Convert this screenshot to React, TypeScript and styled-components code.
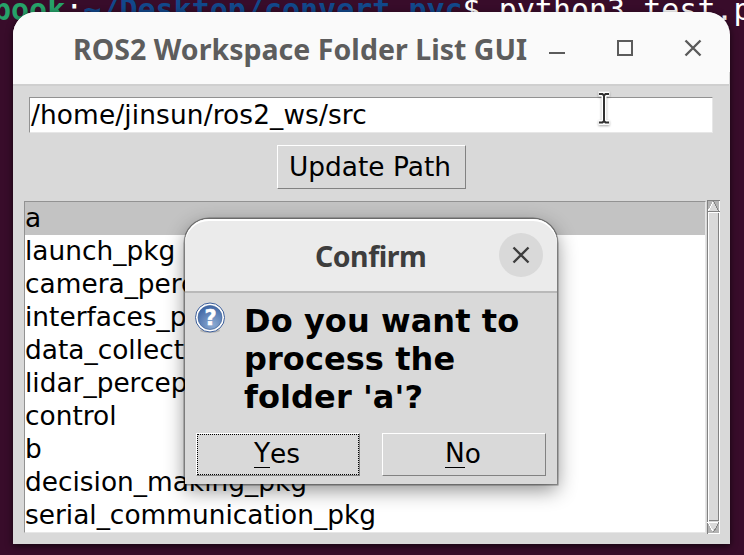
import React from 'react';
import styled, { createGlobalStyle } from 'styled-components';

const GlobalStyle = createGlobalStyle`
  * { box-sizing: border-box; }
  body { margin: 0; overflow: hidden; }
`;

const uiFont = '"DejaVu Sans", sans-serif';
const titleFont = '"Noto Sans", "Open Sans", sans-serif';

const Desktop = styled.div`
  position: relative;
  width: 744px;
  height: 555px;
  padding: 12px 14px 11px 13px;
  overflow: hidden;
  background: #380c2a;
  font-family: ${uiFont};
  color: #000;
`;

const TerminalLine = styled.div`
  position: absolute;
  left: -7px;
  top: -8px;
  font: 30px/36px "DejaVu Sans Mono", monospace;
  white-space: pre;
`;

const Prompt = styled.span<{ $color: string; $bold?: boolean }>`
  color: ${p => p.$color};
  font-weight: ${p => (p.$bold ? 700 : 400)};
`;

const Window = styled.main`
  position: relative;
  display: flex;
  flex-direction: column;
  width: 717px;
  height: 532px;
  border-radius: 23px 23px 0 0;
  background: linear-gradient(#fafafa 60px, #d9d9d9 60px);
  box-shadow: 0 2px 7px rgba(0, 0, 0, 0.65);
`;

const TitleBar = styled.header`
  display: flex;
  align-items: center;
  flex: none;
  width: 716px;
  height: 74px;
  padding-left: 60px;
  border-radius: 23px 23px 0 0;
  border-bottom: 2px solid #cfcfcf;
  background: #fafafa;
`;

const Title = styled.h1<{ $spacing: number; $color: string }>`
  margin: 2px 0 0;
  font: 700 28.5px/40px ${titleFont};
  letter-spacing: ${p => p.$spacing}px;
  color: ${p => p.$color};
  white-space: nowrap;
`;

const WindowControls = styled.div`
  display: flex;
  gap: 44px;
  margin-left: auto;
  margin-right: 24px;
`;

const Glyph = styled.svg`
  display: block;
  width: 24px;
  height: 24px;
  fill: none;
  stroke: #5b5b5b;
  stroke-width: 2;
`;

const Body = styled.section`
  display: flex;
  flex-direction: column;
  align-items: center;
  padding: 11px 1px 0 0;
`;

const Entry = styled.div`
  width: 684px;
  height: 36px;
  padding-left: 1px;
  border: 1px solid;
  border-color: #929292 #e7e7e7 #e7e7e7 #929292;
  background: #fff;
  font-size: 26.4px;
  line-height: 34px;
  letter-spacing: 0.12px;
  white-space: nowrap;
`;

const Button = styled.div<{ $width: number; $height: number; $focused?: boolean }>`
  display: flex;
  align-items: center;
  justify-content: center;
  width: ${p => p.$width}px;
  height: ${p => p.$height}px;
  padding: 0 2px 2px 0;
  border: 1px solid;
  border-color: #fff #828282 #828282 #fff;
  font-size: 26.4px;
  line-height: 31px;
  outline: ${p => (p.$focused ? '1px dotted #000' : 'none')};
  outline-offset: -2px;
`;

const UpdateButton = styled(Button)`
  margin: 12px 0;
`;

const ListArea = styled.div`
  display: flex;
  align-items: center;
  align-self: flex-start;
  gap: 1px;
  margin-top: -1px;
  margin-left: 11px;
`;

const ListBox = styled.div`
  width: 682px;
  height: 332px;
  border: 1px solid;
  border-color: #929292 #e7e7e7 #e7e7e7 #929292;
  background: #fff;
`;

const ListRow = styled.div<{ $selected?: boolean }>`
  height: 33px;
  background: ${p => (p.$selected ? '#c3c3c3' : 'transparent')};
  font-size: 26.4px;
  line-height: 31px;
  white-space: nowrap;
`;

const ScrollBar = styled.svg`
  display: block;
  width: 13px;
  height: 334px;
`;

const Dialog = styled.div`
  position: absolute;
  left: 185px;
  top: 219px;
  width: 372px;
  height: 265px;
  border-radius: 24px 24px 0 0;
  background: #d9d9d9;
  box-shadow: 0 0 0 1.5px rgba(0, 0, 0, 0.38), 0 6px 20px rgba(0, 0, 0, 0.45);
`;

const DialogTitleBar = styled.header`
  display: flex;
  align-items: center;
  justify-content: space-between;
  height: 74px;
  padding: 0 14px 0 130px;
  border-radius: 24px 24px 0 0;
  border-bottom: 2px solid #b9b9b9;
  box-shadow: inset 0 2px 0 #fff;
  background: #ebebeb;
`;

const CloseButton = styled.div`
  display: grid;
  place-items: center;
  width: 44px;
  height: 44px;
  border-radius: 50%;
  background: #d9d9d9;
`;

const DialogMessage = styled.div`
  display: flex;
  gap: 18px;
  padding: 9px 0 0 9px;
`;

const Question = styled.p`
  width: 300px;
  margin: 0;
  font-size: 32px;
  font-weight: 700;
  line-height: 38px;
  letter-spacing: 0.08px;
  white-space: pre;
`;

const QuestionIcon = styled.svg`
  width: 32px;
  height: 32px;
  flex: none;
`;

const DialogButtons = styled.footer`
  display: flex;
  gap: 22px;
  padding: 17px 0 0 11px;
`;

const Mnemonic = styled.span`
  box-shadow: 0 1px 0 #000;
  line-height: 26px;
  height: 27px;
  display: inline-block;
`;

const Pointer = styled.svg`
  position: absolute;
  left: 594px;
  top: 88px;
  width: 20px;
  height: 42px;
  filter: drop-shadow(0 1px 1px rgba(0, 0, 0, 0.35));
`;

const folders = [
  'a',
  'launch_pkg',
  'camera_perception_pkg',
  'interfaces_pkg',
  'data_collection_pkg',
  'lidar_perception_pkg',
  'control',
  'b',
  'decision_making_pkg',
  'serial_communication_pkg',
];

export default function App() {
  return (
    <Desktop>
      <GlobalStyle />
      <TerminalLine>
        <Prompt $color="#26a269" $bold>book</Prompt>
        <Prompt $color="#fff">:</Prompt>
        <Prompt $color="#12488b" $bold>~/Desktop/convert_pyc</Prompt>
        <Prompt $color="#fff">$ python3 test.py</Prompt>
      </TerminalLine>

      <Window>
        <TitleBar>
          <Title $spacing={0.03} $color="#5d5d5d">ROS2 Workspace Folder List GUI</Title>
          <WindowControls>
            <Glyph viewBox="0 0 24 24"><path d="M4 17H20" /></Glyph>
            <Glyph viewBox="0 0 24 24"><rect x="5" y="5" width="14" height="14" /></Glyph>
            <Glyph viewBox="0 0 24 24"><path d="M4.5 4.5L19.5 19.5M19.5 4.5L4.5 19.5" strokeWidth="2.4" /></Glyph>
          </WindowControls>
        </TitleBar>
        <Body>
          <Entry>/home/jinsun/ros2_ws/src</Entry>
          <UpdateButton $width={189} $height={44}>Update Path</UpdateButton>
          <ListArea>
            <ListBox>
              {folders.map((name, i) => (
                <ListRow key={name} $selected={i === 0}>{name}</ListRow>
              ))}
            </ListBox>
            <ScrollBar viewBox="0 0 13 334" shapeRendering="crispEdges">
              <rect width="13" height="334" fill="#b3b3b3" />
              <path d="M0 .5H13M.5 0V334" stroke="#828282" />
              <path d="M12.5 1V334M1 333.5H13" stroke="#fff" />
              <path d="M1 11.5L6.5 1L12 11.5Z" fill="#d9d9d9" />
              <path d="M1 11.5L6.5 1" stroke="#fff" />
              <path d="M6.5 1L12 11.5H1" fill="none" stroke="#828282" />
              <rect x="1" y="12" width="11" height="310" fill="#d9d9d9" />
              <path d="M1.5 322V12.5H12" fill="none" stroke="#fff" />
              <path d="M11.5 13V320.5H2" fill="none" stroke="#828282" />
              <path d="M1 322.5H12L6.5 332Z" fill="#d9d9d9" />
              <path d="M12 322.5H1L6.5 332" fill="none" stroke="#fff" />
              <path d="M12 322.5L6.5 332" stroke="#828282" />
            </ScrollBar>
          </ListArea>
        </Body>
      </Window>

      <Pointer viewBox="0 0 20 42">
        <g fill="none">
          <path d="M4.5 6H8.5L10 7.5L11.5 6H15.5M10 7V34M4.5 34.5H8.5L10 33L11.5 34.5H15.5" stroke="#fff" strokeWidth="5" />
          <path d="M5 6H8.5L10 7.5L11.5 6H15M10 7V34M5 34.5H8.5L10 33L11.5 34.5H15" stroke="#303030" strokeWidth="2" />
        </g>
      </Pointer>

      <Dialog role="dialog">
        <DialogTitleBar>
          <Title $spacing={-0.5} $color="#3d3d3d">Confirm</Title>
          <CloseButton>
            <Glyph viewBox="0 0 24 24"><path d="M4.5 4.5L19.5 19.5M19.5 4.5L4.5 19.5" stroke="#3d3d3d" strokeWidth="2.4" /></Glyph>
          </CloseButton>
        </DialogTitleBar>
        <DialogMessage>
          <QuestionIcon viewBox="0 0 32 32">
            <defs>
              <radialGradient id="orb" cx=".6" cy=".8" r=".8">
                <stop offset="0" stopColor="#8eacd3" />
                <stop offset="1" stopColor="#3f66a5" />
              </radialGradient>
            </defs>
            <ellipse cx="16" cy="28.5" rx="10" ry="2.3" fill="#b4b4b4" />
            <circle cx="16" cy="15.5" r="14.5" fill="#fff" stroke="#3a5d99" />
            <circle cx="16" cy="15.5" r="12" fill="url(#orb)" stroke="#416499" strokeWidth=".7" />
            <text x="16.5" y="23" textAnchor="middle" fill="#fff" stroke="#fff" strokeWidth=".5" fontFamily="DejaVu Sans" fontSize="21" fontWeight="700">?</text>
          </QuestionIcon>
          <Question>{"Do you want to\nprocess the\nfolder 'a'?"}</Question>
        </DialogMessage>
        <DialogButtons>
          <Button $width={164} $height={43} $focused><Mnemonic>Y</Mnemonic>es</Button>
          <Button $width={164} $height={43}><Mnemonic>N</Mnemonic>o</Button>
        </DialogButtons>
      </Dialog>
    </Desktop>
  );
}
